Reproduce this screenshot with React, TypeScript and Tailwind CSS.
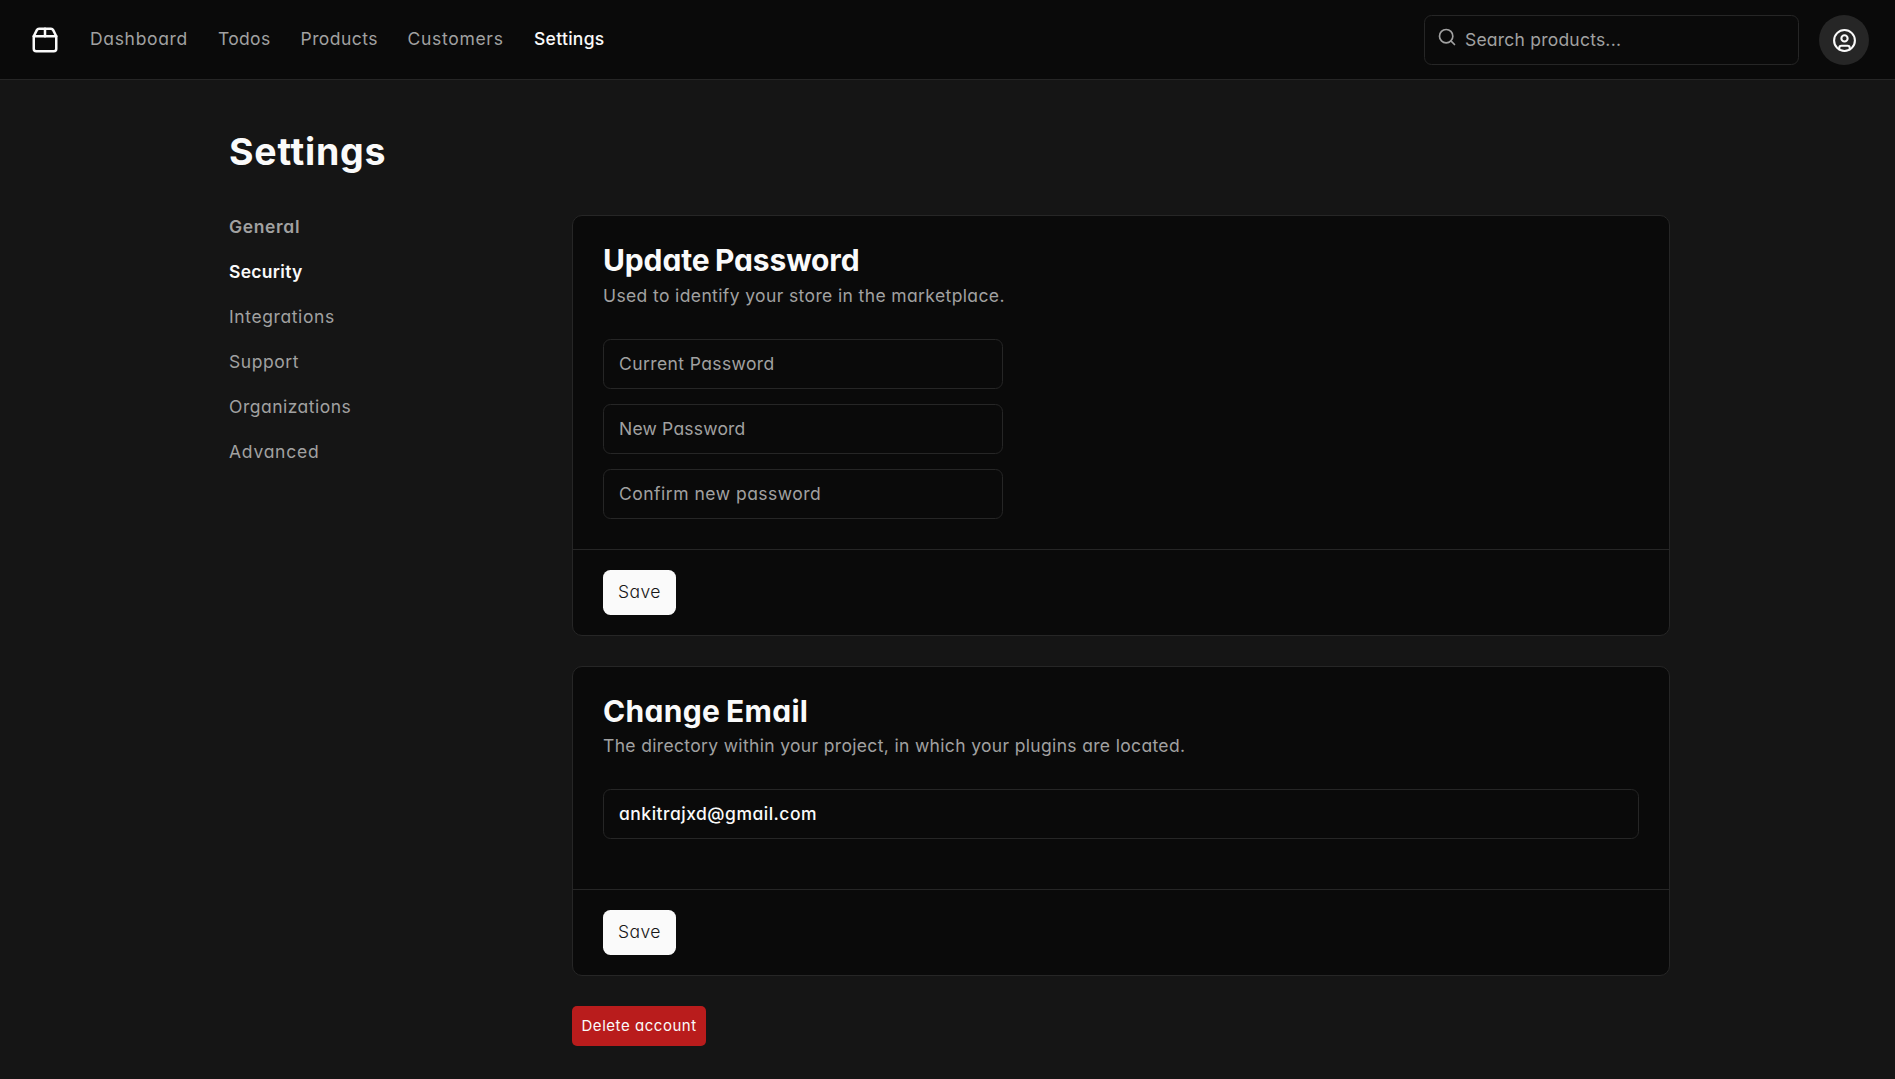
import type { ReactNode } from "react";

const navLinks = [
  { label: "Dashboard", style: "w-[98px] tracking-[0.68px] text-neutral-400" },
  { label: "Todos", style: "w-[52.5px] tracking-[0.32px] text-neutral-400" },
  { label: "Products", style: "w-[77px] tracking-[0.45px] text-neutral-400" },
  { label: "Customers", style: "w-[96.5px] tracking-[0.7px] text-neutral-400" },
  { label: "Settings", style: "w-[71px] tracking-[0.28px] font-medium text-neutral-50" },
];

const sections = [
  { label: "General", style: "font-semibold tracking-[0.65px] text-neutral-400" },
  { label: "Security", style: "font-semibold tracking-[0.3px] text-neutral-50" },
  { label: "Integrations", style: "tracking-[0.6px] text-neutral-400" },
  { label: "Support", style: "tracking-[0.55px] text-neutral-400" },
  { label: "Organizations", style: "tracking-[0.5px] text-neutral-400" },
  { label: "Advanced", style: "tracking-[0.76px] text-neutral-400" },
];

const inputClass =
  "block h-[50px] rounded-[7.5px] border border-neutral-800 bg-neutral-950 px-[15px] pb-px text-[17.5px] leading-[25px] outline-none placeholder:text-neutral-400 placeholder:opacity-100";

function Icon({ className, children }: { className: string; children: ReactNode }) {
  return (
    <svg
      viewBox="0 0 24 24"
      fill="none"
      stroke="currentColor"
      strokeWidth="2"
      strokeLinecap="round"
      strokeLinejoin="round"
      className={className}
    >
      {children}
    </svg>
  );
}

function Header() {
  return (
    <header className="flex h-20 items-center border-b border-neutral-800 bg-neutral-950 pr-[26px] pl-[30px]">
      <a href="#">
        <Icon className="size-[30px] text-neutral-50">
          <path d="M3 9h18v10a2 2 0 0 1-2 2H5a2 2 0 0 1-2-2V9Z" />
          <path d="m3 9 2.45-4.9A2 2 0 0 1 7.24 3h9.52a2 2 0 0 1 1.8 1.1L21 9" />
          <path d="M12 3v6" />
        </Icon>
      </a>
      <nav className="ml-[30px] flex gap-[30px] pb-0.5">
        {navLinks.map((link) => (
          <a key={link.label} href="#" className={`whitespace-nowrap ${link.style}`}>
            {link.label}
          </a>
        ))}
      </nav>
      <form className="relative mt-px ml-auto">
        <Icon className="absolute top-3 left-[12.5px] size-5 text-neutral-400">
          <circle cx="11" cy="11" r="8" />
          <path d="m21 21-4.3-4.3" />
        </Icon>
        <input
          type="search"
          placeholder="Search products..."
          className={`${inputClass} w-[375px] pl-10 tracking-[0.22px]`}
        />
      </form>
      <button
        type="button"
        className="mt-px ml-5 flex size-[50px] items-center justify-center rounded-full bg-neutral-800 text-neutral-50"
      >
        <Icon className="size-[25px]">
          <circle cx="12" cy="12" r="10" />
          <circle cx="12" cy="10" r="3" />
          <path d="M7 20.662V19a2 2 0 0 1 2-2h6a2 2 0 0 1 2 2v1.662" />
        </Icon>
      </button>
    </header>
  );
}

function Card({ children }: { children: ReactNode }) {
  return (
    <section className="overflow-hidden rounded-[10px] border border-neutral-800 bg-neutral-950">
      {children}
    </section>
  );
}

function CardFooter() {
  return (
    <div className="border-t border-neutral-800 px-[30px] py-5">
      <button
        type="button"
        className="flex h-[45px] w-[73px] items-center rounded-[7.5px] bg-neutral-50 pb-0.5 pl-[15px] font-[350] tracking-[0.46px] text-neutral-900"
      >
        Save
      </button>
    </div>
  );
}

export default function App() {
  return (
    <div className="flex h-screen flex-col overflow-hidden bg-[#151515] font-['Inter',sans-serif] text-[17.5px] leading-[25px] text-neutral-50 [font-feature-settings:'cv11']">
      <Header />
      <main className="w-[1670px] pt-[49px] pl-[229px]">
        <h1 className="text-[37.5px] leading-[45px] font-bold tracking-[0.75px]">Settings</h1>
        <div className="mt-[41px] grid grid-cols-[313px_1098px] gap-[30px]">
          <nav className="-mt-px flex flex-col gap-5">
            {sections.map((section) => (
              <a key={section.label} href="#" className={section.style}>
                {section.label}
              </a>
            ))}
          </nav>
          <div className="flex flex-col items-stretch gap-[30px]">
            <Card>
              <div className="px-[30px] pt-[29px] pb-[30px]">
                <h2 className="text-[30px] leading-[30px] font-bold tracking-[-0.13px] [word-spacing:-1.5px]">
                  Update Password
                </h2>
                <p className="mt-2 tracking-[0.38px] text-neutral-400">
                  Used to identify your store in the marketplace.
                </p>
                <form className="mt-[31px] flex flex-col gap-[15px]">
                  <input
                    placeholder="Current Password"
                    className={`${inputClass} w-[400px] tracking-[0.4px]`}
                  />
                  <input
                    placeholder="New Password"
                    className={`${inputClass} w-[400px] tracking-[0.2px]`}
                  />
                  <input
                    placeholder="Confirm new password"
                    className={`${inputClass} w-[400px] tracking-[0.5px]`}
                  />
                </form>
              </div>
              <CardFooter />
            </Card>
            <Card>
              <div className="px-[30px] pt-[29px] pb-[50px]">
                <h2 className="text-[30px] leading-[30px] font-bold tracking-[0.3px] [word-spacing:-1.5px]">
                  Change Email
                </h2>
                <p className="mt-[7px] tracking-[0.34px] text-neutral-400">
                  The directory within your project, in which your plugins are located.
                </p>
                <form className="mt-[31px]">
                  <input
                    defaultValue="ankitrajxd@gmail.com"
                    className={`${inputClass} w-full font-[450] tracking-[0.5px]`}
                  />
                </form>
              </div>
              <CardFooter />
            </Card>
            <button
              type="button"
              className="flex h-10 w-[134px] items-center rounded-[5px] bg-[#b91c1c] pb-px pl-[9.5px] text-[15px] whitespace-nowrap tracking-[0.54px]"
            >
              Delete account
            </button>
          </div>
        </div>
      </main>
    </div>
  );
}
